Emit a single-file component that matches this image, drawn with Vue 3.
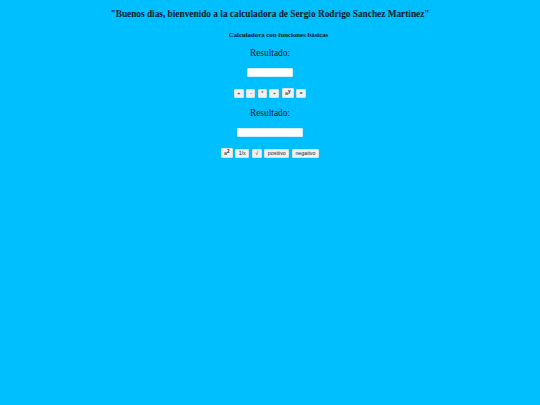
<script setup>
const row1 = [
  { base: '+' }, { base: '-' }, { base: '*' }, { base: '÷' },
  { base: 'a', sup: 'y', tall: true }, { base: '=' },
]
const row2 = [
  { base: 'a', sup: '2', tall: true }, { base: '1/x' }, { base: '√' },
  { base: 'positivo' }, { base: 'negativo' },
]
</script>

<template>
  <main class="page">
    <h1 class="title">"Buenos dias, bienvenido a la calculadora de Sergio Rodrigo Sanchez Martinez"</h1>
    <h2 class="subtitle">Calculadora con funciones básicas</h2>
    <p class="label">Resultado:</p>
    <input class="field field-small" type="text" />
    <div class="keys keys-one">
      <button v-for="k in row1" :key="k.base" class="key" :class="{ tall: k.tall }" type="button">{{ k.base }}<sup v-if="k.sup">{{ k.sup }}</sup></button>
    </div>
    <p class="label label-two">Resultado:</p>
    <input class="field field-large" type="text" />
    <div class="keys keys-two">
      <button v-for="k in row2" :key="k.base" class="key" :class="{ tall: k.tall }" type="button">{{ k.base }}<sup v-if="k.sup">{{ k.sup }}</sup></button>
    </div>
  </main>
</template>

<style>
html, body { margin: 0; background: #00bfff; }
</style>

<style scoped>
.page {
  height: 405px;
  box-sizing: border-box;
  padding-top: 9px;
  display: flex;
  flex-direction: column;
  align-items: center;
  background: #00bfff;
  color: #00192b;
  font-family: "Liberation Serif", serif;
  overflow: hidden;
}
.title { margin: 0; font-size: 9.3px; line-height: 11px; font-weight: 700; }
.subtitle { margin: 11px 0 0 17px; font-size: 6.8px; line-height: 8px; font-weight: 700; }
.label { margin: 8px 0 0; font-size: 9.4px; line-height: 12px; }
.label-two { margin-top: 9px; }
.field {
  display: block;
  box-sizing: border-box;
  height: 9px;
  padding: 0;
  margin-top: 9px;
  border: 1px solid #cfeffb;
  border-radius: 1px;
  background: #fff;
}
.field-small { width: 46px; }
.field-large { width: 66px; }
.keys { display: flex; gap: 2.6px; align-items: flex-end; }
.keys-one { margin-top: 11px; }
.keys-two { margin-top: 11px; }
.key {
  box-sizing: border-box;
  height: 9px;
  padding: 0 2.5px;
  border: 1px solid #dcdfe0;
  border-radius: 1px;
  background: #eef0f1;
  color: #222;
  font-family: "Liberation Sans", sans-serif;
  font-size: 5.3px;
  line-height: 7px;
}
.key.tall { height: 10px; padding: 0 2px; }
.key sup { font-size: 4.6px; font-weight: 700; line-height: 0; vertical-align: 2px; }
</style>
